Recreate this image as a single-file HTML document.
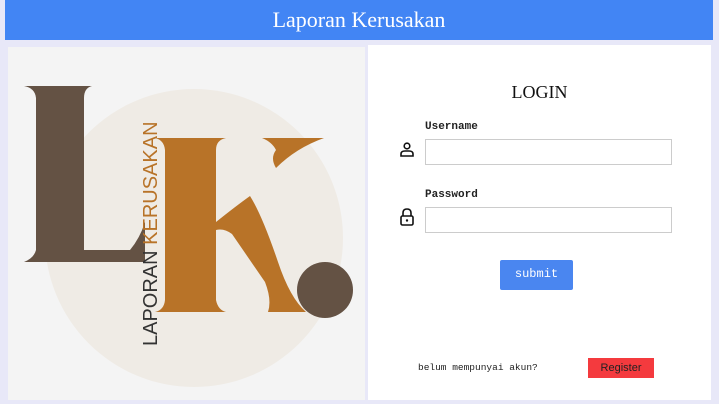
<!DOCTYPE html>
<html><head><meta charset="utf-8"><style>
body{margin:0;width:719px;height:404px;background:#e8e8f8;position:relative;overflow:hidden;font-family:"Liberation Sans",sans-serif}
.hdr{position:absolute;left:5px;top:0;width:708px;height:40px;background:#4285f4;color:#fff;text-align:center;font:22px/40px "Liberation Serif",serif}
.left{position:absolute;left:8px;top:47px;width:357px;height:353px;background:#f4f4f4}
.right{position:absolute;left:368px;top:45px;width:343px;height:355px;background:#fff}
.mono{font-family:"Liberation Mono",monospace}
.lbl{position:absolute;left:57px;font-size:11px;font-weight:bold;color:#222}
.inp{position:absolute;left:57px;width:247px;height:26px;border:1px solid #ccc;box-sizing:border-box;background:#fff}
</style></head><body>
<div class="hdr">Laporan Kerusakan</div>
<div class="left"></div>
<svg style="position:absolute;left:0;top:0" width="370" height="404">
<circle cx="194" cy="238" r="149" fill="#efebe5"/>
<path d="M24 86 H92 Q84 88 84 98 V250 H130 Q140 238 145 222 V262 H24 Q34 258 36 250 V98 Q35 88 24 86Z" fill="#645244"/>
<path d="M155 138 H226 Q216 140 216 150 V300 Q218 310 226 312 H155 Q164 310 165 300 V150 Q164 140 155 138Z" fill="#b87328"/>
<path d="M216 222 Q236 206 250 196 Q262 215 278 262 Q290 298 306 312 H268 Q272 300 265 282 L232 234 Q224 228 216 230Z" fill="#b87328"/>
<path d="M262 138 H324 Q296 148 276 168 Q270 158 276 150 Q272 142 262 138Z" fill="#b87328"/>
<circle cx="325" cy="290" r="28" fill="#645244"/>
<text transform="translate(157,346) rotate(-90)" font-family="Liberation Sans" font-size="20" fill="#333">LAPORAN <tspan fill="#b87328">KERUSAKAN</tspan></text>
</svg>
<div class="right">
<div style="position:absolute;left:0;width:343px;top:37px;text-align:center;font:18px 'Liberation Serif',serif;color:#111">LOGIN</div>
<div class="lbl mono" style="top:76px">Username</div>
<svg style="position:absolute;left:31px;top:97px" width="16" height="16"><circle cx="8" cy="4" r="2.8" fill="none" stroke="#111" stroke-width="1.6"/><path d="M2 14 V12 Q2 9 6 9 H10 Q14 9 14 12 V14Z" fill="none" stroke="#111" stroke-width="1.6"/></svg>
<div class="inp" style="top:94px"></div>
<div class="lbl mono" style="top:144px">Password</div>
<svg style="position:absolute;left:31px;top:162px" width="16" height="20"><path d="M4 9 V6 Q4 2 8 2 Q12 2 12 6 V9" fill="none" stroke="#111" stroke-width="1.6"/><rect x="2" y="9" width="12" height="9" rx="1.5" fill="none" stroke="#111" stroke-width="1.6"/><circle cx="8" cy="13.5" r="1.2" fill="#111"/></svg>
<div class="inp" style="top:162px"></div>
<div class="mono" style="position:absolute;left:132px;top:215px;width:73px;height:30px;background:#4a86f0;border-radius:2px;color:#fff;font-size:12px;text-align:center;line-height:28px">submit</div>
<div class="mono" style="position:absolute;left:50px;top:317px;font-size:9.5px;color:#222">belum mempunyai akun?</div>
<div style="position:absolute;left:220px;top:313px;width:66px;height:20px;background:#f43a3e;color:#222;font-size:11px;text-align:center;line-height:20px">Register</div>
</div>
</body></html>
